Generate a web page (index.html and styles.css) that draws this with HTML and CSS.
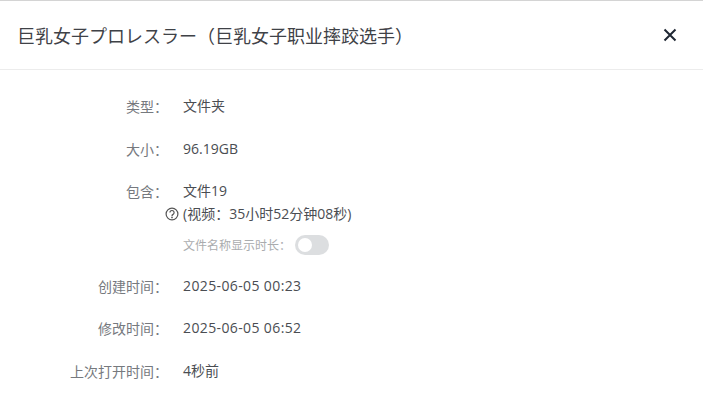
FILE: index.html
```html
<!DOCTYPE html>
<html lang="zh-CN">
<head>
<meta charset="utf-8">
<title>详情</title>
<link rel="stylesheet" href="styles.css">
</head>
<body>
<div class="dialog">
  <header class="head">
    <h1 class="title">巨乳女子プロレスラー（巨乳女子职业摔跤选手）</h1>
    <button class="close" aria-label="关闭">
      <svg width="14" height="14" viewBox="0 0 14 14"><path d="M1.5 1.5l11 11M12.5 1.5l-11 11" stroke="#1f2733" stroke-width="2" fill="none"/></svg>
    </button>
  </header>
  <div class="body">
    <div class="row"><span class="label">类型：</span><span class="value">文件夹</span></div>
    <div class="row"><span class="label">大小：</span><span class="value">96.19GB</span></div>
    <div class="row row-multi">
      <span class="label">包含：</span>
      <div class="stack">
        <span class="value">文件19</span>
        <div class="duration">
          <svg class="help" width="14" height="14" viewBox="0 0 14 14"><circle cx="7" cy="7" r="5.9" fill="none" stroke="#555" stroke-width="1.2"/><path d="M4.9 5.6a2.1 2.1 0 1 1 3.2 1.8c-.8.4-1.1.8-1.1 1.5" fill="none" stroke="#555" stroke-width="1.2"/><circle cx="7" cy="10.4" r=".85" fill="#555"/></svg>
          <span class="value">(视频：35小时52分钟08秒)</span>
        </div>
        <div class="toggle-row">
          <span class="toggle-label">文件名称显示时长：</span>
          <span class="switch"><span class="knob"></span></span>
        </div>
      </div>
    </div>
    <div class="row"><span class="label">创建时间：</span><span class="value date">2025-06-05 00:23</span></div>
    <div class="row"><span class="label">修改时间：</span><span class="value date">2025-06-05 06:52</span></div>
    <div class="row"><span class="label">上次打开时间：</span><span class="value">4秒前</span></div>
  </div>
</div>
</body>
</html>
```
FILE: styles.css
```css
* { box-sizing: border-box; }
html, body { margin: 0; height: 100%; overflow: hidden; background: #fff; }
body { font-family: "Noto Sans CJK SC", "Liberation Sans", sans-serif; }
.dialog { width: 703px; height: 406px; border-top: 1px solid #d4d4d4; }
.head {
  height: 69px;
  display: flex;
  align-items: center;
  justify-content: space-between;
  padding: 0 26px 0 18px;
  border-bottom: 1px solid #ececec;
}
.title { margin: 0; font-size: 18px; font-weight: 400; color: #3f4247; line-height: 26px; margin-left: -1px; }
.close { padding: 0; border: 0; background: none; display: flex; }
.body { display: flex; flex-direction: column; padding-top: 25px; }
.row { display: flex; align-items: flex-start; height: 22px; margin-bottom: 20.5px; }
.row-multi { height: auto; margin-bottom: 18.5px; }
.label { width: 168px; margin-right: 15px; flex: none; text-align: right; font-size: 14px; line-height: 22px; color: #76797e; }
.value { font-family: "Open Sans", "Noto Sans CJK SC", sans-serif; font-size: 14px; line-height: 22px; color: #4a4d52; white-space: nowrap; }
.date { letter-spacing: 0.38px; }
.stack { display: flex; flex-direction: column; }
.duration { display: flex; align-items: center; gap: 4px; margin-left: -18px; height: 22px; margin-top: 1px; }
.toggle-row { display: flex; align-items: center; height: 22px; margin-top: 9px; }
.toggle-label { font-size: 12px; color: #aaacae; line-height: 22px; width: 112px; white-space: nowrap; }
.switch { width: 34px; height: 20px; border-radius: 10px; background: #dcdee0; display: flex; align-items: center; padding-left: 3px; }
.knob { width: 14px; height: 14px; border-radius: 50%; background: #fff; }
```
